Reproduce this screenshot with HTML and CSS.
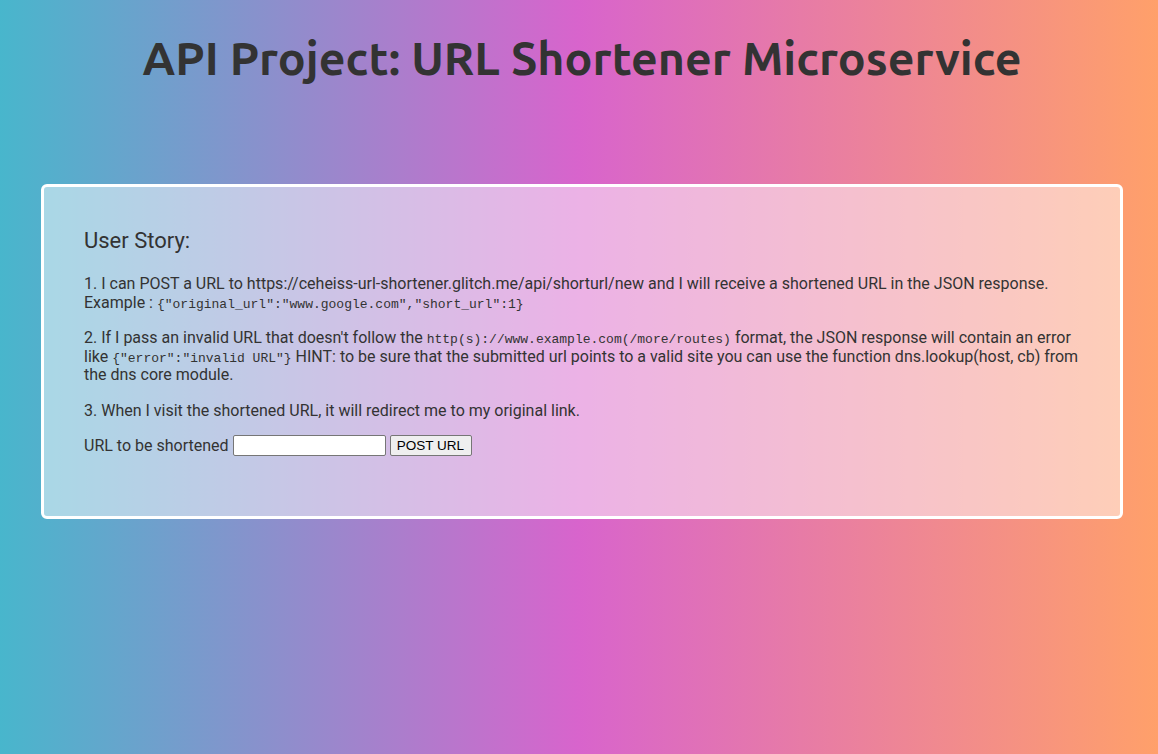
FILE: index.html
```html
<!DOCTYPE html>
<html>
<head>
<meta charset="utf-8">
<title>URL Shortener Microservice</title>
<link rel="stylesheet" href="styles.css">
</head>
<body>
<header class="top">
  <h1 class="title">API Project: URL Shortener Microservice</h1>
</header>
<main class="card">
  <h3 class="story-title">User Story:</h3>
  <p class="para">1. I can POST a URL to https://ceheiss-url-shortener.glitch.me/api/shorturl/new and I will receive a shortened URL in the JSON response.<br>Example : <code class="mono">{"original_url":"www.google.com","short_url":1}</code></p>
  <p class="para">2. If I pass an invalid URL that doesn't follow the <code class="mono">http(s)://www.example.com(/more/routes)</code> format, the JSON response will contain an error like <code class="mono">{"error":"invalid URL"}</code> HINT: to be sure that the submitted url points to a valid site you can use the function dns.lookup(host, cb) from the dns core module.</p>
  <p class="para para-last">3. When I visit the shortened URL, it will redirect me to my original link.</p>
  <form class="form" onsubmit="return false">
    <label class="label" for="url_input">URL to be shortened</label>
    <input class="field" id="url_input" type="text" name="url">
    <button class="btn" type="submit">POST URL</button>
  </form>
</main>
</body>
</html>
```

FILE: styles.css
```css
html, body {
  margin: 0;
  padding: 0;
}
body {
  width: 1158px;
  height: 754px;
  overflow: hidden;
  background: linear-gradient(to right, #48b6cc 0%, #d864cc 50%, #ffa06a 100%);
  font-family: Roboto, "Liberation Sans", sans-serif;
  color: #333;
  box-sizing: border-box;
  padding: 0 35px 0 41px;
}
.top {
  height: 184px;
  display: flex;
  justify-content: center;
}
.title {
  margin: 30px 0 0 0;
  font-family: Ubuntu, "Open Sans", "Liberation Sans", sans-serif;
  font-weight: 700;
  font-size: 46.5px;
  line-height: 56px;
  color: #333;
  letter-spacing: 0;
  white-space: nowrap;
}
.card {
  box-sizing: border-box;
  height: 335px;
  border: 3px solid #fff;
  border-radius: 6px;
  background: rgba(255, 255, 255, 0.5);
  padding: 38px 40px 0 40px;
}
.story-title {
  margin: 0 0 18px 0;
  font-size: 22px;
  font-weight: 400;
  line-height: 32px;
}
.para {
  margin: 0 0 17px 0;
  font-size: 16px;
  line-height: 18.5px;
}
.para-last {
  margin-bottom: 15px;
}
.mono {
  font-family: "Liberation Mono", monospace;
  font-size: 13px;
  line-height: 1;
}
.form {
  display: flex;
  align-items: center;
  font-size: 16px;
  margin-top: 0;
}
.label {
  margin-right: 4px;
}
.field {
  box-sizing: border-box;
  width: 153px;
  height: 21px;
  border: 1px solid #767676;
  border-radius: 2px;
  background: #fff;
  margin: 0 4px 0 0;
  padding: 1px 2px;
}
.btn {
  box-sizing: border-box;
  height: 21px;
  width: 82px;
  border: 1px solid #767676;
  border-radius: 2px;
  background: #efefef;
  font-family: "Liberation Sans", Arial, sans-serif;
  font-size: 13.5px;
  color: #000;
  padding: 0;
}
```
